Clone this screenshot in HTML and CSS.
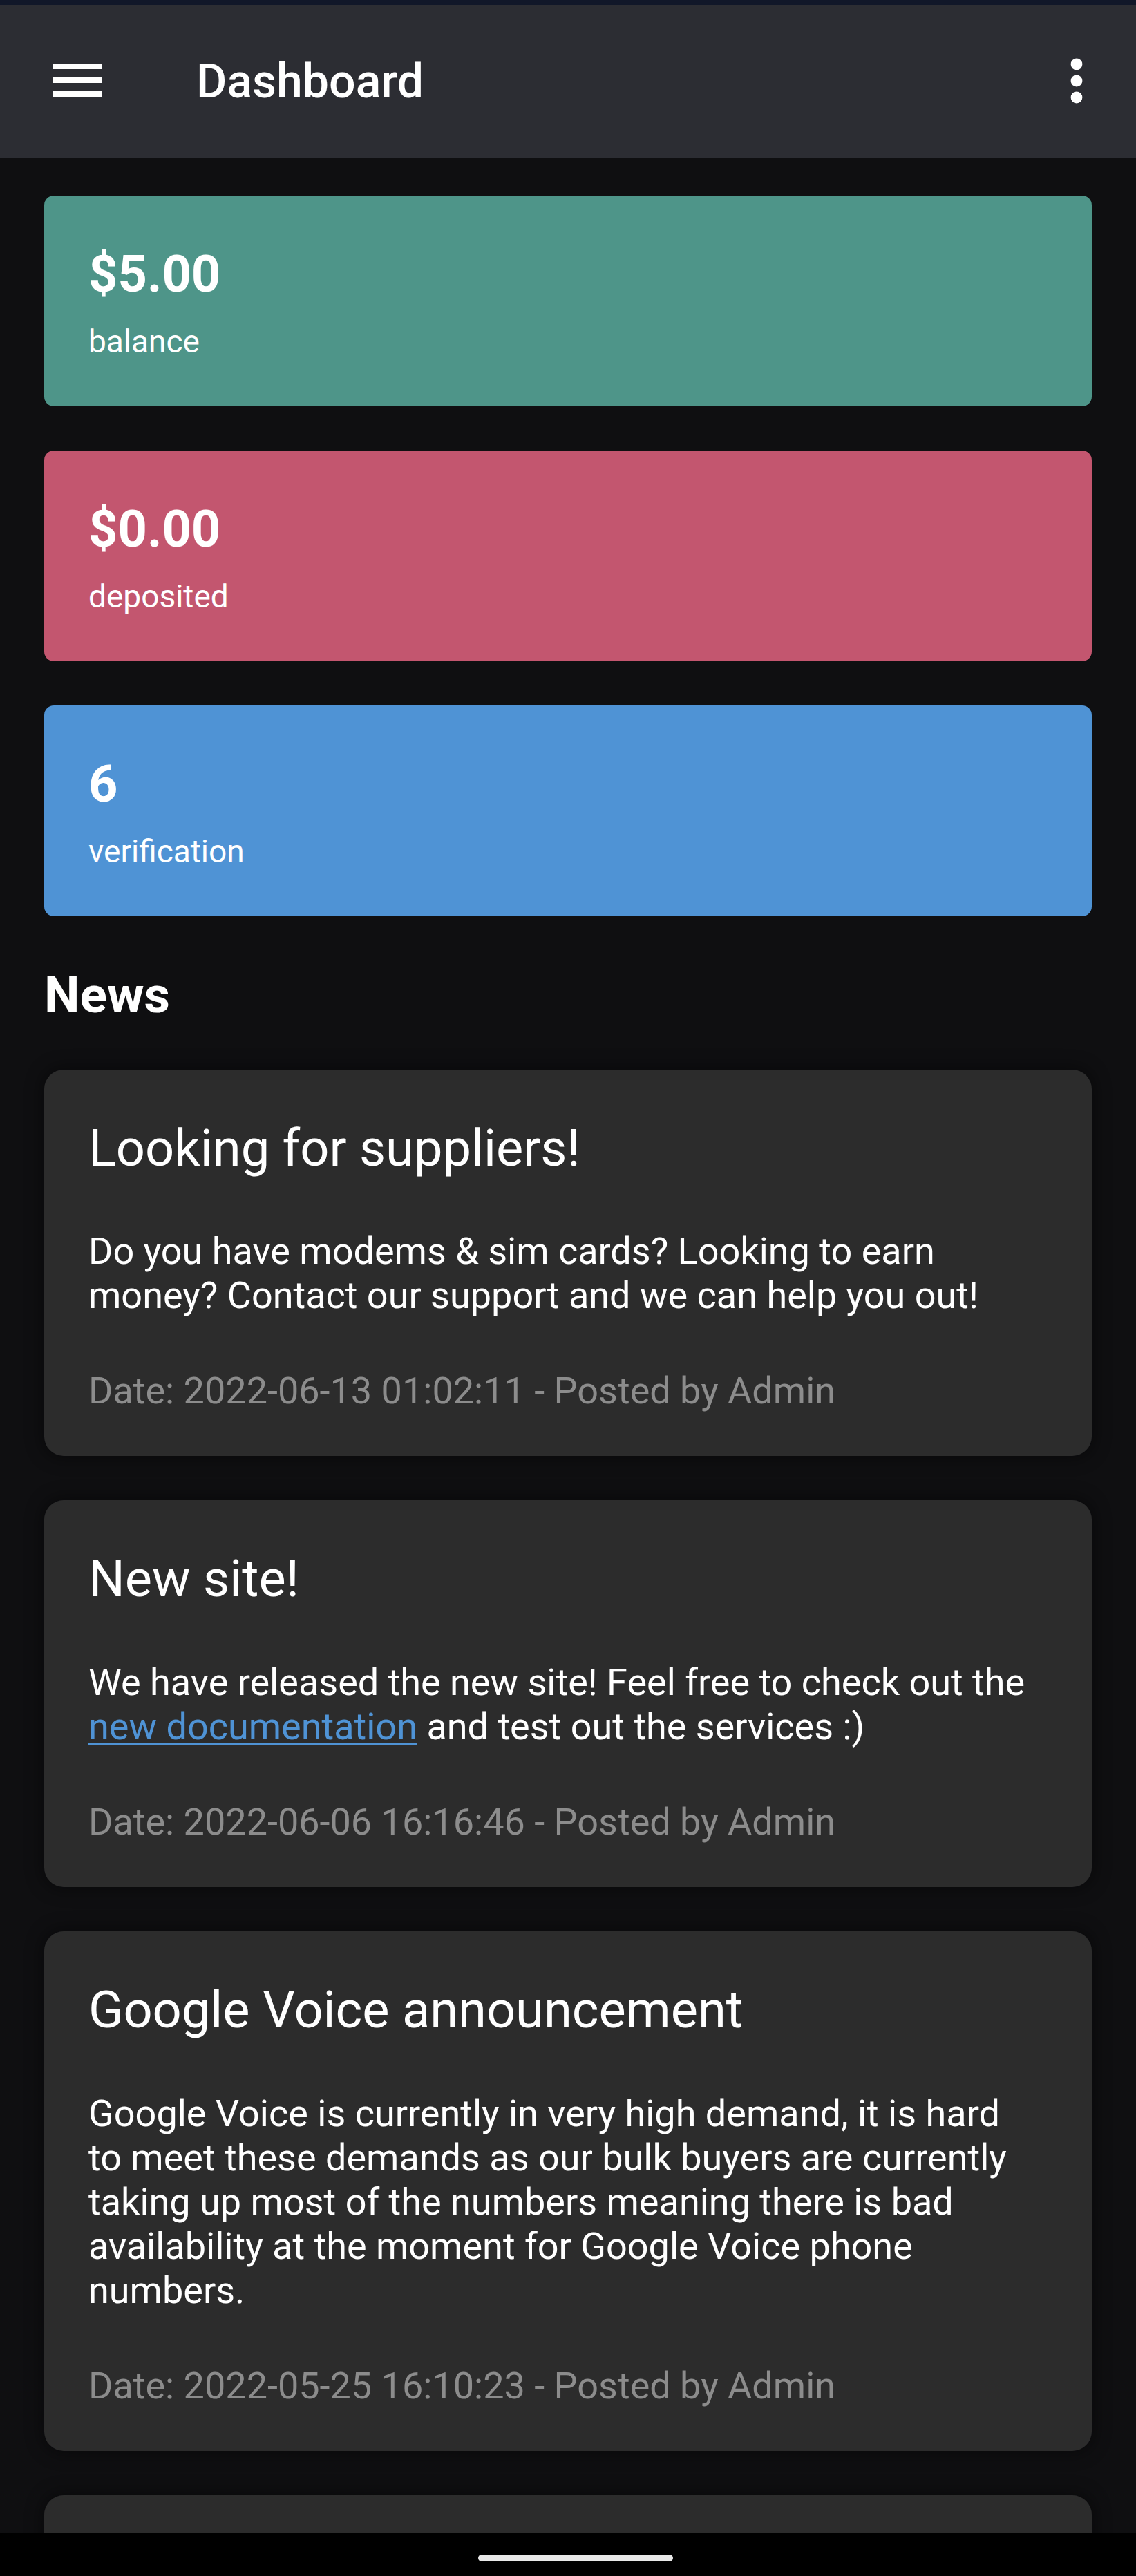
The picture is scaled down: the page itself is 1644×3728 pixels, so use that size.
FILE: index.html
```html
<!DOCTYPE html>
<html lang="en">
<head>
<meta charset="utf-8">
<title>Dashboard</title>
<link rel="stylesheet" href="styles.css">
</head>
<body>
<div class="statusline"></div>
<header class="appbar">
  <button class="iconbtn menu" aria-label="menu">
    <svg viewBox="0 0 24 24" width="96" height="96"><path fill="#fff" d="M3 18h18v-2H3v2zm0-5h18v-2H3v2zm0-7v2h18V6H3z"/></svg>
  </button>
  <h1 class="title">Dashboard</h1>
  <button class="iconbtn more" aria-label="more">
    <svg viewBox="0 0 24 24" width="96" height="96"><circle cx="12" cy="6" r="2.1" fill="#fff"/><circle cx="12" cy="12" r="2.1" fill="#fff"/><circle cx="12" cy="18" r="2.1" fill="#fff"/></svg>
  </button>
</header>
<main class="content">
  <section class="stat stat-teal">
    <div class="stat-value">$5.00</div>
    <div class="stat-label">balance</div>
  </section>
  <section class="stat stat-pink">
    <div class="stat-value">$0.00</div>
    <div class="stat-label">deposited</div>
  </section>
  <section class="stat stat-blue">
    <div class="stat-value">6</div>
    <div class="stat-label">verification</div>
  </section>

  <h2 class="news-heading">News</h2>

  <article class="news-card">
    <h3 class="news-title">Looking for suppliers!</h3>
    <p class="news-body">Do you have modems &amp; sim cards? Looking to earn money? Contact our support and we can help you out!</p>
    <p class="news-meta">Date: 2022-06-13 01:02:11 - Posted by Admin</p>
  </article>
  <article class="news-card">
    <h3 class="news-title">New site!</h3>
    <p class="news-body">We have released the new site! Feel free to check out the <a href="#" class="link">new documentation</a> and test out the services :)</p>
    <p class="news-meta">Date: 2022-06-06 16:16:46 - Posted by Admin</p>
  </article>
  <article class="news-card">
    <h3 class="news-title">Google Voice announcement</h3>
    <p class="news-body">Google Voice is currently in very high demand, it is hard to meet these demands as our bulk buyers are currently taking up most of the numbers meaning there is bad availability at the moment for Google Voice phone numbers.</p>
    <p class="news-meta">Date: 2022-05-25 16:10:23 - Posted by Admin</p>
  </article>
  <article class="news-card news-card-tail"></article>
</main>
<div class="navbar"><span class="pill"></span></div>
</body>
</html>
```

FILE: styles.css
```css
html, body {
  margin: 0;
  padding: 0;
}
body {
  width: 1644px;
  height: 3728px;
  overflow: hidden;
  background: #0f0f11;
  font-family: Roboto, "Liberation Sans", sans-serif;
  color: #fff;
  position: relative;
}
.statusline {
  height: 7px;
  background: #111729;
}
.appbar {
  height: 221px;
  background: #2c2d33;
  display: flex;
  align-items: center;
  padding: 0 38px 0 64px;
  box-sizing: border-box;
}
.iconbtn {
  width: 96px;
  height: 96px;
  padding: 0;
  border: 0;
  background: none;
  display: flex;
  align-items: center;
  justify-content: center;
}
.iconbtn svg { display: block; }
.menu { margin-top: -4px; }
.more { margin-left: auto; margin-top: -2px; }
.title {
  margin: 0 0 0 124px;
  font-size: 68px;
  font-weight: 500;
  line-height: 1;
  letter-spacing: 0;
}
.content {
  padding: 55px 64px 0;
  display: flex;
  flex-direction: column;
}
.stat {
  border-radius: 14px;
  padding: 70px 64px 66px;
  margin-bottom: 64px;
}
.stat:nth-of-type(3) { margin-bottom: 0; }
.stat-teal { background: #4e9589; }
.stat-pink { background: #c3566f; }
.stat-blue { background: #4f93d5; }
.stat-value {
  font-size: 74px;
  font-weight: 700;
  line-height: 1.2;
  margin-bottom: 25px;
}
.stat-label {
  font-size: 46px;
  line-height: 1.2;
}
.news-heading {
  font-size: 73px;
  font-weight: 700;
  line-height: 1.2;
  margin: 71px 0 63px;
}
.news-card {
  background: #2c2c2c;
  border-radius: 28px;
  padding: 70px 84px 62px 64px;
  margin-bottom: 64px;
  box-shadow: 0 0 22px 6px rgba(0,0,0,0.35);
}
.news-title {
  font-size: 74px;
  font-weight: 400;
  line-height: 1.2;
  margin: 0 0 73px;
}
.news-body {
  font-size: 54px;
  line-height: 64px;
  margin: 0 0 74px;
}
.news-meta {
  font-size: 54px;
  line-height: 64px;
  margin: 0;
  color: #8c8c8c;
}
.link {
  color: #4f93d5;
  text-decoration: underline;
  text-decoration-thickness: 3px;
  text-underline-offset: 6px;
}
.news-card-tail {
  height: 400px;
  padding: 0;
}
.navbar {
  position: absolute;
  left: 0;
  right: 0;
  bottom: 0;
  height: 62px;
  background: #000;
}
.pill {
  position: absolute;
  left: 692px;
  top: 31px;
  width: 282px;
  height: 10px;
  border-radius: 5px;
  background: #e8e8e8;
}
```
